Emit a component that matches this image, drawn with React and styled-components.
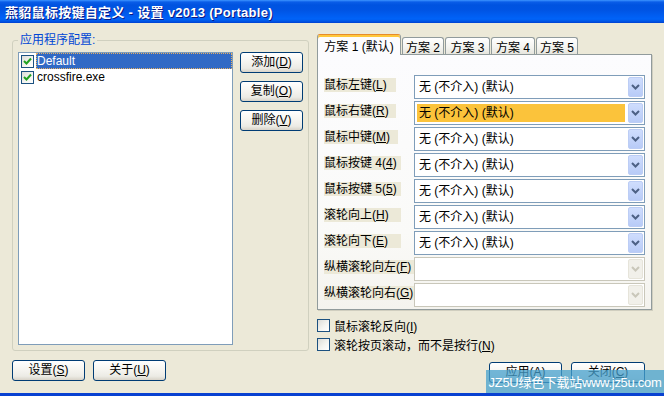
import React from 'react'
import styled, { createGlobalStyle } from 'styled-components'

const GlobalStyle = createGlobalStyle`
  html, body {
    margin: 0;
    padding: 0;
  }
  body {
    width: 664px;
    height: 396px;
    overflow: hidden;
    background: #ECE9D8;
    font-family: "Liberation Sans", "Noto Sans CJK SC", sans-serif;
    font-size: 12px;
    color: #000;
  }
`

const Window = styled.div`
  position: relative;
  width: 664px;
  height: 396px;
  display: flex;
  flex-direction: column;
  background: #ECE9D8;
`

const TitleBar = styled.div`
  flex: none;
  height: 23px;
  display: flex;
  align-items: center;
  padding-left: 5px;
  background: linear-gradient(to bottom, #3D95FF 0, #0A5DE8 2px, #0053E0 5px, #0054E3 10px, #005CF0 15px, #0063F8 19px, #0058E8 21px, #0040D0 23px);
  color: #fff;
  font-weight: bold;
  font-size: 13px;
  letter-spacing: 0.3px;
  text-shadow: 1px 1px 0 #0A1883;
  white-space: nowrap;
`

const Body = styled.div`
  flex: 1;
  display: flex;
  padding-left: 12px;
`

const BottomEdge = styled.div`
  flex: none;
  height: 3px;
  background: #0841D1;
`

const LeftCol = styled.div`
  width: 297px;
  display: flex;
  flex-direction: column;
  padding-top: 10px;
`

const GroupBox = styled.fieldset`
  margin: 0;
  height: 318px;
  box-sizing: border-box;
  padding: 5px 5px 5px 5px;
  border: 1px solid #D0D0BF;
  border-radius: 3px;
  display: flex;
  align-items: flex-start;
  gap: 7px;
`

const Legend = styled.legend`
  padding: 0 2px;
  color: #0046D5;
  line-height: 14px;
  font-size: 12px;
`

const ListBox = styled.div`
  width: 215px;
  height: 293px;
  box-sizing: border-box;
  border: 1px solid #7F9DB9;
  background: #fff;
`

const ListRow = styled.div`
  display: flex;
  align-items: center;
  height: 16px;
  padding-left: 2px;
`

const ItemText = styled.span`
  flex: 1;
  height: 16px;
  line-height: 16px;
  margin-left: 2px;
  padding-left: 1px;
  color: ${p => (p.$selected ? '#fff' : '#000')};
  background: ${p => (p.$selected ? '#316AC5' : 'transparent')};
  outline: ${p => (p.$selected ? '1px dotted #E8B060' : 'none')};
  outline-offset: -1px;
`

const Box = styled.span`
  flex: none;
  width: 13px;
  height: 13px;
  box-sizing: border-box;
  border: 1px solid #1C5180;
  background: linear-gradient(135deg, #DCDCD7 0%, #F4F4F0 55%, #FFFFFF 100%);
  display: flex;
  align-items: center;
  justify-content: center;
`

const ButtonCol = styled.div`
  display: flex;
  flex-direction: column;
  gap: 8px;
`

const XpButton = styled.button`
  width: ${p => p.$w || 63}px;
  height: 21px;
  box-sizing: border-box;
  padding: 0;
  border: 1px solid #003C74;
  border-radius: 3px;
  background: linear-gradient(to bottom, #FFFFFF 0%, #F7F6F2 40%, #ECEBE5 80%, #D8D3C8 100%);
  font-family: inherit;
  font-size: 12px;
  color: #000;
  line-height: 19px;
`

const ButtonRow = styled.div`
  display: flex;
  gap: ${p => p.$gap || 9}px;
  margin-top: ${p => p.$top || 9}px;
  justify-content: ${p => (p.$end ? 'flex-end' : 'flex-start')};
  padding-right: ${p => (p.$end ? 7 : 0)}px;
`

const RightCol = styled.div`
  width: 335px;
  margin-left: 8px;
  display: flex;
  flex-direction: column;
  padding-top: 11px;
`

const TabStrip = styled.div`
  display: flex;
  align-items: flex-end;
  height: 21px;
  gap: 1px;
`

const Tab = styled.div`
  position: relative;
  z-index: ${p => (p.$active ? 2 : 0)};
  width: ${p => p.$w}px;
  height: ${p => (p.$active ? 21 : 17)}px;
  margin-bottom: ${p => (p.$active ? 0 : 1)}px;
  box-sizing: border-box;
  border: 1px solid #919B9C;
  border-top-color: ${p => (p.$active ? '#E68B2C' : '#919B9C')};
  border-bottom: none;
  border-radius: 3px 3px 0 0;
  background: ${p => (p.$active ? '#FCFCFE' : 'linear-gradient(to bottom, #FFFFFF, #F3F3EF 60%, #E6E5DD)')};
  box-shadow: ${p => (p.$active ? 'inset 0 2px 0 #FFC83C' : 'none')};
  display: flex;
  align-items: center;
  justify-content: center;
  padding-top: ${p => (p.$active ? 1 : 0)}px;
  font-size: 12px;
  white-space: nowrap;
`

const Panel = styled.div`
  margin-top: -1px;
  height: 256px;
  box-sizing: border-box;
  border: 1px solid #919B9C;
  box-shadow: 1px 1px 0 #D0CEBF;
  background: linear-gradient(to bottom, #FCFCFE 0%, #FAFAF8 70%, #F4F3EE 100%);
  padding: 20px 6px 0 6px;
  display: flex;
  flex-direction: column;
  gap: 2px;
`

const Row = styled.div`
  display: flex;
  height: 24px;
`

const LabelCell = styled.div`
  width: 90px;
  flex: none;
  padding-top: 3px;
  box-sizing: border-box;
`

const LabelText = styled.span`
  display: inline-block;
  width: ${p => p.$w}px;
  height: 14px;
  line-height: 14px;
  background: #ECE9D8;
  white-space: nowrap;
  overflow: hidden;
`

const Combo = styled.div`
  flex: 1;
  display: flex;
  box-sizing: border-box;
  border: 1px solid ${p => (p.$disabled ? '#C9C7BA' : '#7F9DB9')};
  background: #fff;
  padding: 1px;
`

const ComboValue = styled.div`
  flex: 1;
  margin: 1px 3px 1px 1px;
  padding-left: 2px;
  line-height: 18px;
  white-space: nowrap;
  background: ${p => (p.$focus ? '#FBC33B' : 'transparent')};
`

const ComboArrow = styled.div`
  flex: none;
  width: 15px;
  box-sizing: border-box;
  border: 1px solid ${p => (p.$disabled ? '#E6E4DA' : '#BCCDF5')};
  border-radius: 2px;
  background: ${p => (p.$disabled ? '#F1F0EA' : 'linear-gradient(to bottom, #CFDDFD, #B8CBF7)')};
  display: flex;
  align-items: center;
  justify-content: center;
`

const CheckRow = styled.div`
  display: flex;
  align-items: center;
  gap: 4px;
  height: 19px;
  white-space: nowrap;
`

const CheckList = styled.div`
  margin-top: 6px;
  display: flex;
  flex-direction: column;
`

const Watermark = styled.div`
  position: absolute;
  right: 0;
  bottom: 3px;
  width: 178px;
  height: 23px;
  background: rgba(70, 160, 205, 0.75);
  color: #fff;
  font-size: 13px;
  letter-spacing: -0.3px;
  display: flex;
  align-items: center;
  justify-content: center;
  white-space: nowrap;
`

const Mn = ({ k }) => (
  <>
    (<u>{k}</u>)
  </>
)

const Chevron = ({ disabled }) => (
  <svg width="9" height="6" viewBox="0 0 9 6">
    <path d="M1 1 L4.5 4.5 L8 1" fill="none" stroke={disabled ? '#C9C7BA' : '#4D6185'} strokeWidth="2" />
  </svg>
)

const Check = () => (
  <svg width="11" height="11" viewBox="0 0 11 11">
    <path d="M2 5 L4.5 7.5 L9 2.5" fill="none" stroke="#21A121" strokeWidth="2" />
  </svg>
)

const tabs = [
  { label: '方案 1 (默认)', w: 84 },
  { label: '方案 2', w: 42 },
  { label: '方案 3', w: 45 },
  { label: '方案 4', w: 44 },
  { label: '方案 5', w: 42 }
]

const rows = [
  { text: '鼠标左键', k: 'L', w: 72 },
  { text: '鼠标右键', k: 'R', w: 72, focus: true },
  { text: '鼠标中键', k: 'M', w: 74 },
  { text: '鼠标按键 4', k: '4', w: 77 },
  { text: '鼠标按键 5', k: '5', w: 77 },
  { text: '滚轮向上', k: 'H', w: 77 },
  { text: '滚轮向下', k: 'E', w: 77 },
  { text: '纵横滚轮向左', k: 'F', w: 90, disabled: true },
  { text: '纵横滚轮向右', k: 'G', w: 90, disabled: true }
]

export default function App () {
  return (
    <Window>
      <GlobalStyle />
      <TitleBar>燕貂鼠标按键自定义 - 设置 v2013 (Portable)</TitleBar>
      <Body>
        <LeftCol>
          <GroupBox>
            <Legend>应用程序配置:</Legend>
            <ListBox>
              <ListRow>
                <Box><Check /></Box>
                <ItemText $selected>Default</ItemText>
              </ListRow>
              <ListRow>
                <Box><Check /></Box>
                <ItemText>crossfire.exe</ItemText>
              </ListRow>
            </ListBox>
            <ButtonCol>
              <XpButton>添加<Mn k='D' /></XpButton>
              <XpButton>复制<Mn k='O' /></XpButton>
              <XpButton>删除<Mn k='V' /></XpButton>
            </ButtonCol>
          </GroupBox>
          <ButtonRow $top={9} $gap={8}>
            <XpButton $w={73}>设置<Mn k='S' /></XpButton>
            <XpButton $w={73}>关于<Mn k='U' /></XpButton>
          </ButtonRow>
        </LeftCol>
        <RightCol>
          <TabStrip>
            {tabs.map((t, i) => (
              <Tab key={i} $w={t.w} $active={i === 0}>{t.label}</Tab>
            ))}
          </TabStrip>
          <Panel>
            {rows.map((r, i) => (
              <Row key={i}>
                <LabelCell>
                  <LabelText $w={r.w}>{r.text}<Mn k={r.k} /></LabelText>
                </LabelCell>
                <Combo $disabled={r.disabled}>
                  <ComboValue $focus={r.focus}>{r.disabled ? '' : '无 (不介入) (默认)'}</ComboValue>
                  <ComboArrow $disabled={r.disabled}><Chevron disabled={r.disabled} /></ComboArrow>
                </Combo>
              </Row>
            ))}
          </Panel>
          <CheckList>
            <CheckRow><Box /><span>鼠标滚轮反向<Mn k='I' /></span></CheckRow>
            <CheckRow><Box /><span>滚轮按页滚动，而不是按行<Mn k='N' /></span></CheckRow>
          </CheckList>
          <ButtonRow $end $top={8} $gap={9}>
            <XpButton $w={73}>应用<Mn k='A' /></XpButton>
            <XpButton $w={74}>关闭<Mn k='C' /></XpButton>
          </ButtonRow>
        </RightCol>
      </Body>
      <BottomEdge />
      <Watermark>JZ5U绿色下载站www.jz5u.com</Watermark>
    </Window>
  )
}
